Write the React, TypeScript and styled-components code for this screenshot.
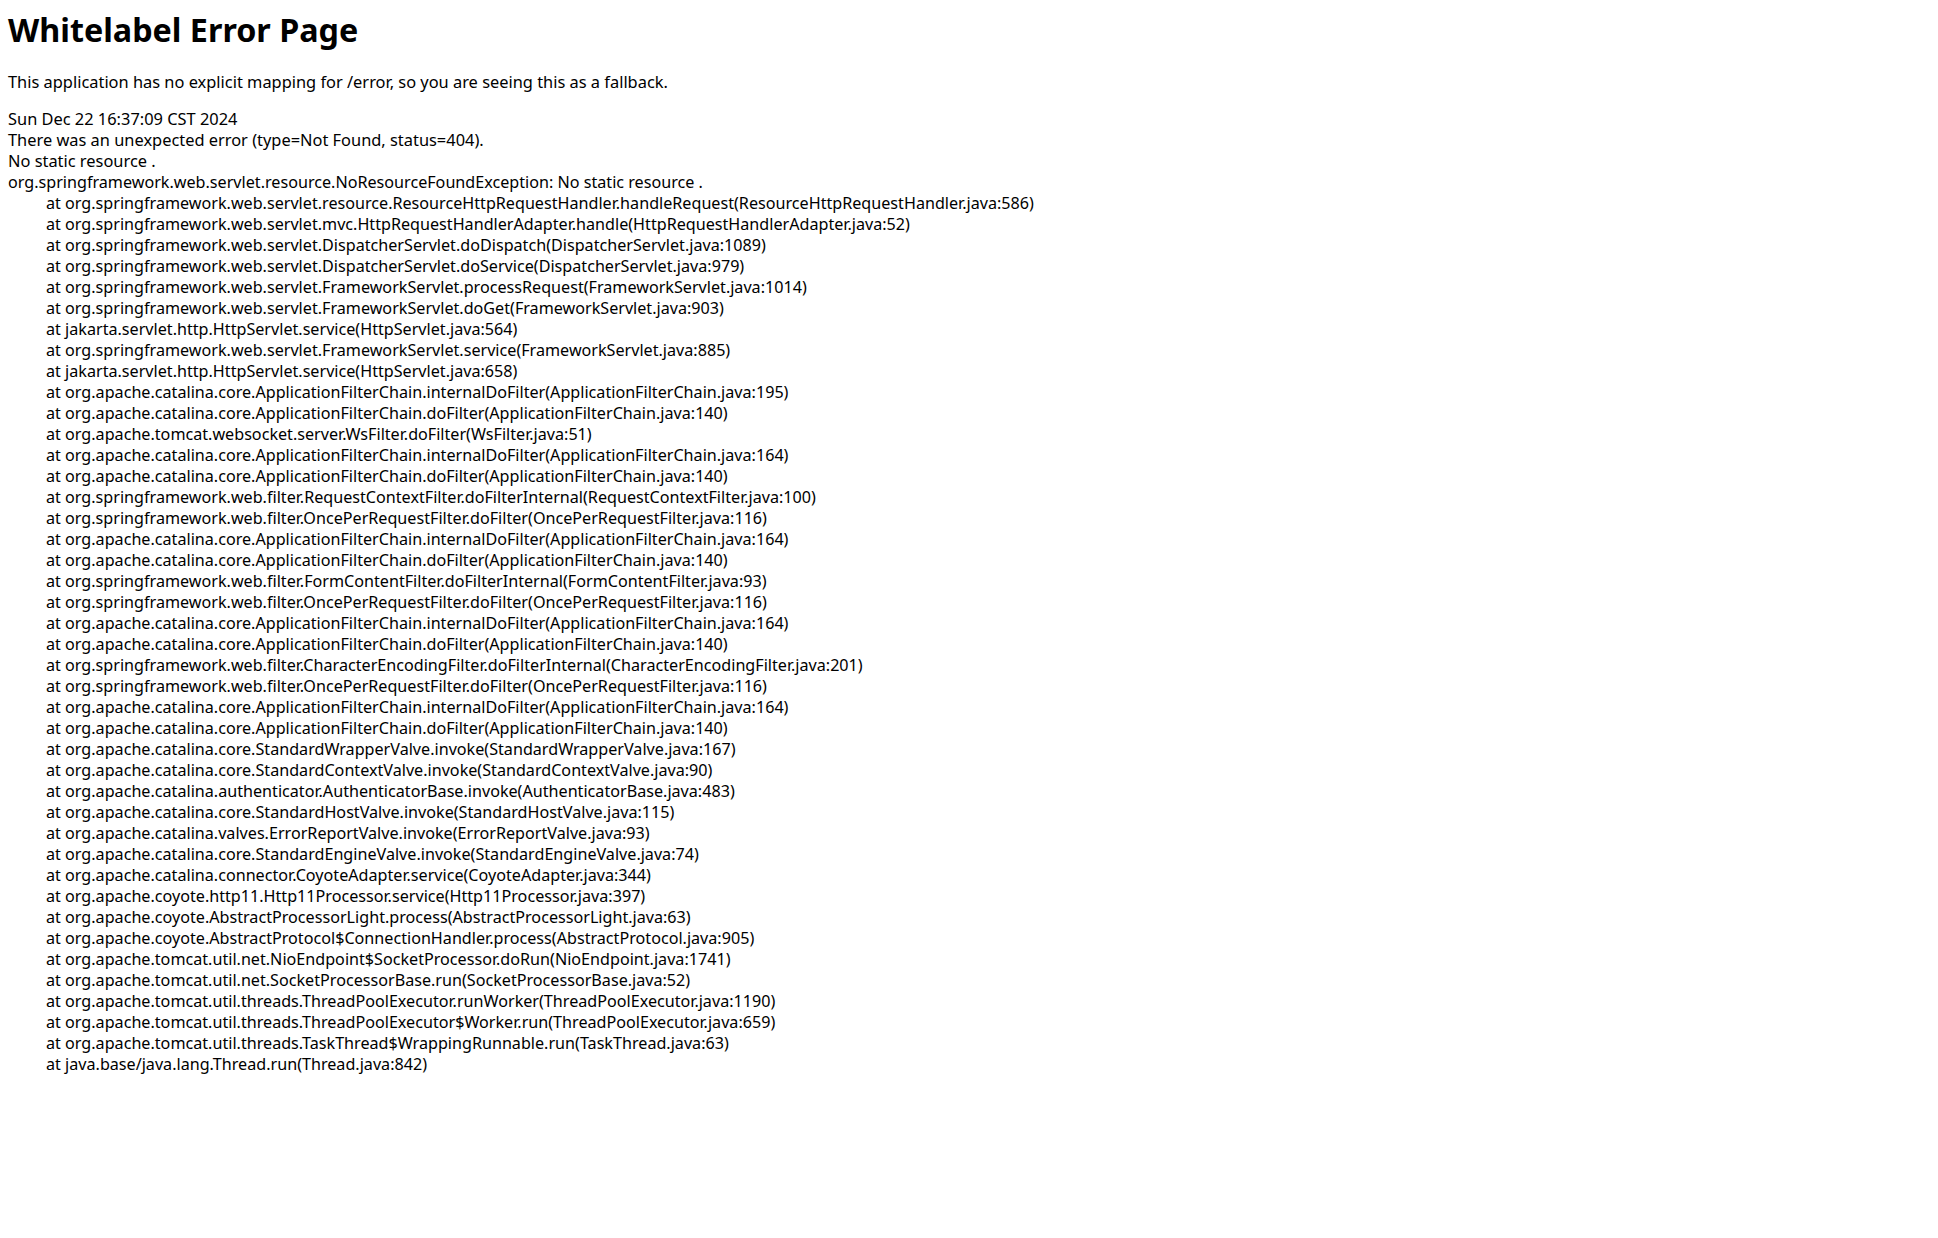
import React from "react";
import styled, { createGlobalStyle } from "styled-components";

const GlobalStyle = createGlobalStyle`
  html, body {
    margin: 0;
    padding: 0;
    background: #ffffff;
  }
  body {
    font-family: "Noto Sans", "Liberation Sans", Arial, sans-serif;
    color: #000000;
  }
`;

const Page = styled.main`
  padding: 8px;
  font-family: "Noto Sans", "Liberation Sans", Arial, sans-serif;
  font-size: 16.4px;
  line-height: 21px;
  color: #000000;
`;

const Title = styled.h1`
  margin: 1px 0 22px;
  font-size: 32.3px;
  line-height: 40px;
  font-weight: 700;
`;

const Lead = styled.p`
  margin: 0 0 16px;
`;

const Line = styled.div`
  margin: 0;
`;

const Trace = styled.div`
  margin-top: 1px;
  font-size: 16.15px;
  white-space: pre-wrap;
  tab-size: 38px;
  -moz-tab-size: 38px;
`;

const frames = [
  "org.springframework.web.servlet.resource.ResourceHttpRequestHandler.handleRequest(ResourceHttpRequestHandler.java:586)",
  "org.springframework.web.servlet.mvc.HttpRequestHandlerAdapter.handle(HttpRequestHandlerAdapter.java:52)",
  "org.springframework.web.servlet.DispatcherServlet.doDispatch(DispatcherServlet.java:1089)",
  "org.springframework.web.servlet.DispatcherServlet.doService(DispatcherServlet.java:979)",
  "org.springframework.web.servlet.FrameworkServlet.processRequest(FrameworkServlet.java:1014)",
  "org.springframework.web.servlet.FrameworkServlet.doGet(FrameworkServlet.java:903)",
  "jakarta.servlet.http.HttpServlet.service(HttpServlet.java:564)",
  "org.springframework.web.servlet.FrameworkServlet.service(FrameworkServlet.java:885)",
  "jakarta.servlet.http.HttpServlet.service(HttpServlet.java:658)",
  "org.apache.catalina.core.ApplicationFilterChain.internalDoFilter(ApplicationFilterChain.java:195)",
  "org.apache.catalina.core.ApplicationFilterChain.doFilter(ApplicationFilterChain.java:140)",
  "org.apache.tomcat.websocket.server.WsFilter.doFilter(WsFilter.java:51)",
  "org.apache.catalina.core.ApplicationFilterChain.internalDoFilter(ApplicationFilterChain.java:164)",
  "org.apache.catalina.core.ApplicationFilterChain.doFilter(ApplicationFilterChain.java:140)",
  "org.springframework.web.filter.RequestContextFilter.doFilterInternal(RequestContextFilter.java:100)",
  "org.springframework.web.filter.OncePerRequestFilter.doFilter(OncePerRequestFilter.java:116)",
  "org.apache.catalina.core.ApplicationFilterChain.internalDoFilter(ApplicationFilterChain.java:164)",
  "org.apache.catalina.core.ApplicationFilterChain.doFilter(ApplicationFilterChain.java:140)",
  "org.springframework.web.filter.FormContentFilter.doFilterInternal(FormContentFilter.java:93)",
  "org.springframework.web.filter.OncePerRequestFilter.doFilter(OncePerRequestFilter.java:116)",
  "org.apache.catalina.core.ApplicationFilterChain.internalDoFilter(ApplicationFilterChain.java:164)",
  "org.apache.catalina.core.ApplicationFilterChain.doFilter(ApplicationFilterChain.java:140)",
  "org.springframework.web.filter.CharacterEncodingFilter.doFilterInternal(CharacterEncodingFilter.java:201)",
  "org.springframework.web.filter.OncePerRequestFilter.doFilter(OncePerRequestFilter.java:116)",
  "org.apache.catalina.core.ApplicationFilterChain.internalDoFilter(ApplicationFilterChain.java:164)",
  "org.apache.catalina.core.ApplicationFilterChain.doFilter(ApplicationFilterChain.java:140)",
  "org.apache.catalina.core.StandardWrapperValve.invoke(StandardWrapperValve.java:167)",
  "org.apache.catalina.core.StandardContextValve.invoke(StandardContextValve.java:90)",
  "org.apache.catalina.authenticator.AuthenticatorBase.invoke(AuthenticatorBase.java:483)",
  "org.apache.catalina.core.StandardHostValve.invoke(StandardHostValve.java:115)",
  "org.apache.catalina.valves.ErrorReportValve.invoke(ErrorReportValve.java:93)",
  "org.apache.catalina.core.StandardEngineValve.invoke(StandardEngineValve.java:74)",
  "org.apache.catalina.connector.CoyoteAdapter.service(CoyoteAdapter.java:344)",
  "org.apache.coyote.http11.Http11Processor.service(Http11Processor.java:397)",
  "org.apache.coyote.AbstractProcessorLight.process(AbstractProcessorLight.java:63)",
  "org.apache.coyote.AbstractProtocol$ConnectionHandler.process(AbstractProtocol.java:905)",
  "org.apache.tomcat.util.net.NioEndpoint$SocketProcessor.doRun(NioEndpoint.java:1741)",
  "org.apache.tomcat.util.net.SocketProcessorBase.run(SocketProcessorBase.java:52)",
  "org.apache.tomcat.util.threads.ThreadPoolExecutor.runWorker(ThreadPoolExecutor.java:1190)",
  "org.apache.tomcat.util.threads.ThreadPoolExecutor$Worker.run(ThreadPoolExecutor.java:659)",
  "org.apache.tomcat.util.threads.TaskThread$WrappingRunnable.run(TaskThread.java:63)",
  "java.base/java.lang.Thread.run(Thread.java:842)",
];

const trace =
  "org.springframework.web.servlet.resource.NoResourceFoundException: No static resource .\n" +
  frames.map((f) => "\tat " + f).join("\n");

export default function App() {
  return (
    <>
      <GlobalStyle />
      <Page>
        <Title>Whitelabel Error Page</Title>
        <Lead>
          This application has no explicit mapping for /error, so you are seeing
          this as a fallback.
        </Lead>
        <Line id="created">Sun Dec 22 16:37:09 CST 2024</Line>
        <Line>There was an unexpected error (type=Not Found, status=404).</Line>
        <Line>No static resource .</Line>
        <Trace>{trace}</Trace>
      </Page>
    </>
  );
}
